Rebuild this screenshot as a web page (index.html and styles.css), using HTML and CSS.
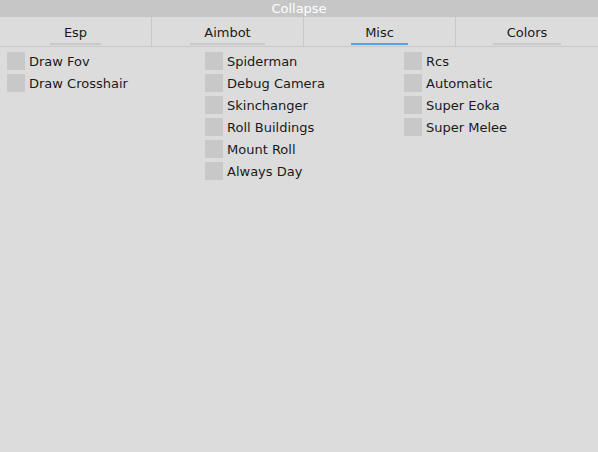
FILE: index.html
```html
<!DOCTYPE html>
<html lang="en">
<head>
    <meta charset="UTF-8">
    <title>Menu</title>
    <link rel="stylesheet" href="styles.css">
</head>
<body>
    <div class="titlebar">Collapse</div>

    <nav class="tabs">
        <div class="tab"><span>Esp</span></div>
        <div class="tab"><span>Aimbot</span></div>
        <div class="tab active"><span>Misc</span></div>
        <div class="tab"><span>Colors</span></div>
    </nav>

    <div class="content">
        <div class="column">
            <label class="option"><span class="box"></span>Draw Fov</label>
            <label class="option"><span class="box"></span>Draw Crosshair</label>
        </div>
        <div class="column">
            <label class="option"><span class="box"></span>Spiderman</label>
            <label class="option"><span class="box"></span>Debug Camera</label>
            <label class="option"><span class="box"></span>Skinchanger</label>
            <label class="option"><span class="box"></span>Roll Buildings</label>
            <label class="option"><span class="box"></span>Mount Roll</label>
            <label class="option"><span class="box"></span>Always Day</label>
        </div>
        <div class="column">
            <label class="option"><span class="box"></span>Rcs</label>
            <label class="option"><span class="box"></span>Automatic</label>
            <label class="option"><span class="box"></span>Super Eoka</label>
            <label class="option"><span class="box"></span>Super Melee</label>
        </div>
    </div>
</body>
</html>
```

FILE: styles.css
```css
body {
    margin: 0;
    height: 452px;
    font-family: "DejaVu Sans", sans-serif;
    font-size: 13px;
    color: #1a1a1a;
    background-color: #dcdcdc;
}

/* === Title bar === */
.titlebar {
    height: 17px;
    line-height: 17px;
    text-align: center;
    color: #ffffff;
    background-color: #c6c6c6;
}

/* === Tabs === */
.tabs {
    display: grid;
    grid-template-columns: 152px 152px 152px 1fr;
    height: 29px;
    border-bottom: 1px solid #c8c8c8;
}

.tab {
    display: flex;
    justify-content: center;
    align-items: flex-end;
    border-right: 1px solid #c8c8c8;
}

.tab:last-child {
    border-right: none;
}

.tab span {
    padding: 0 14px 3px;
    margin-bottom: 1px;
    border-bottom: 2px solid #c8c8c8;
}

.tab.active span {
    border-bottom-color: #5a9ee6;
}

/* === Options === */
.content {
    display: grid;
    grid-template-columns: 198px 199px 1fr;
    padding: 5px 7px;
}

.column {
    display: flex;
    flex-direction: column;
    gap: 4px;
}

.option {
    display: flex;
    align-items: center;
    gap: 4px;
    height: 18px;
}

.box {
    width: 18px;
    height: 18px;
    background-color: #c8c8c8;
}
```
